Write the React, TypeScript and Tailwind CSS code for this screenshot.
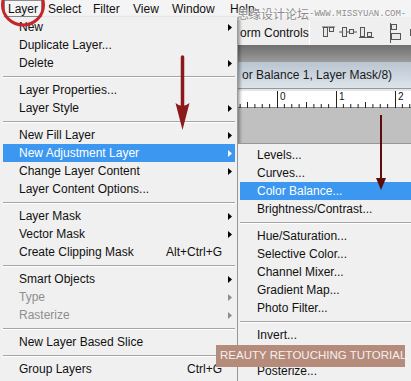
type Row =
  | { sep: true }
  | { label: string; arrow?: boolean; shortcut?: string; disabled?: boolean; active?: boolean; sep?: false };

const mainMenu: Row[] = [
  { label: "New", arrow: true },
  { label: "Duplicate Layer..." },
  { label: "Delete", arrow: true },
  { sep: true },
  { label: "Layer Properties..." },
  { label: "Layer Style", arrow: true },
  { sep: true },
  { label: "New Fill Layer", arrow: true },
  { label: "New Adjustment Layer", arrow: true, active: true },
  { label: "Change Layer Content", arrow: true },
  { label: "Layer Content Options..." },
  { sep: true },
  { label: "Layer Mask", arrow: true },
  { label: "Vector Mask", arrow: true },
  { label: "Create Clipping Mask", shortcut: "Alt+Ctrl+G" },
  { sep: true },
  { label: "Smart Objects", arrow: true },
  { label: "Type", arrow: true, disabled: true },
  { label: "Rasterize", arrow: true, disabled: true },
  { sep: true },
  { label: "New Layer Based Slice" },
  { sep: true },
  { label: "Group Layers", shortcut: "Ctrl+G" },
];

const subMenu: Row[] = [
  { label: "Levels..." },
  { label: "Curves..." },
  { label: "Color Balance...", active: true },
  { label: "Brightness/Contrast..." },
  { sep: true },
  { label: "Hue/Saturation..." },
  { label: "Selective Color..." },
  { label: "Channel Mixer..." },
  { label: "Gradient Map..." },
  { label: "Photo Filter..." },
  { sep: true },
  { label: "Invert..." },
  { label: "Threshold..." },
  { label: "Posterize..." },
];

function Arrow({ color }: { color: string }) {
  return (
    <svg width="4" height="7" viewBox="0 0 4 7">
      <polygon points="0,0 4,3.5 0,7" fill={color} />
    </svg>
  );
}

function MenuRows({ rows, indent }: { rows: Row[]; indent: string }) {
  return (
    <>
      {rows.map((r, i) =>
        r.sep ? (
          <div key={i} className="h-[9px] flex flex-col justify-center">
            <div className="h-px bg-[#a5a5a5]" />
            <div className="h-px bg-white" />
          </div>
        ) : (
          <div
            key={i}
            className={`h-[18px] flex items-center pr-[3px] ${indent} ${
              r.active ? "bg-[#3b97ef] text-white" : r.disabled ? "text-[#8e8e8e]" : "text-[#111]"
            }`}
          >
            <span className="flex-1 whitespace-nowrap">{r.label}</span>
            {r.shortcut && <span className="whitespace-nowrap">{r.shortcut}</span>}
            <span className="w-[4px] ml-[6px] flex items-center">
              {r.arrow && <Arrow color={r.active ? "#fff" : r.disabled ? "#8e8e8e" : "#000"} />}
            </span>
          </div>
        )
      )}
    </>
  );
}

function Ruler() {
  const ticks = [];
  for (let k = -5; k < 24; k++) {
    const x = 39 + (k * 59) / 8;
    if (k % 8 === 0) continue;
    const h = Math.abs(k % 8) === 4 ? 6 : 4;
    ticks.push(<line key={k} x1={x} y1={17 - h} x2={x} y2={17} stroke="#222" strokeWidth="1" />);
  }
  return (
    <svg width="173" height="17" viewBox="0 0 173 17">
      {ticks}
      {[39, 98, 157].map((x, i) => (
        <g key={x}>
          <line x1={x + 0.5} y1="0" x2={x + 0.5} y2="17" stroke="#222" strokeWidth="1" />
          <text x={x + 3} y="9" fontSize="10" fontFamily="Liberation Sans, Arial, sans-serif" fill="#111">
            {i}
          </text>
        </g>
      ))}
    </svg>
  );
}

function AlignIcons() {
  return (
    <svg width="100" height="24" viewBox="0 0 100 24">
      {/* top align */}
      <rect x="1.5" y="5.5" width="4" height="9" fill="#e8e8e8" stroke="#555" />
      <rect x="7.5" y="5.5" width="4" height="4" fill="#e8e8e8" stroke="#555" />
      <line x1="0" y1="5" x2="13" y2="5" stroke="#555" />
      {/* center align */}
      <line x1="17" y1="10" x2="35" y2="10" stroke="#555" />
      <rect x="20.5" y="5.5" width="4" height="9" fill="#e8e8e8" stroke="#555" />
      <rect x="27.5" y="7.5" width="4" height="4" fill="#e8e8e8" stroke="#555" />
      {/* bottom align */}
      <rect x="38.5" y="5.5" width="4" height="9" fill="#e8e8e8" stroke="#555" />
      <rect x="45.5" y="10.5" width="4" height="4" fill="#e8e8e8" stroke="#555" />
      <line x1="37" y1="15.5" x2="52" y2="15.5" stroke="#555" />
      {/* left align */}
      <line x1="68.5" y1="1" x2="68.5" y2="21" stroke="#555" />
      <rect x="69.5" y="2.5" width="5" height="5" fill="#e8e8e8" stroke="#555" />
      <rect x="69.5" y="11.5" width="9" height="6" fill="#e8e8e8" stroke="#555" />
      <rect x="88.5" y="7.5" width="8" height="6" fill="#e8e8e8" stroke="#555" />
    </svg>
  );
}

export default function App() {
  return (
    <div className="relative w-[411px] h-[381px] overflow-hidden bg-[#f0f0f0] font-['Liberation_Sans',Arial,sans-serif] text-[12px]">
      {/* menu bar */}
      <div className="h-[17px] flex items-center bg-[#f4f4f4] text-[#111]">
        <span className="ml-[4px] w-[38px] h-[17px] border border-[#8c8c8c] pl-[3px] flex items-center">Layer</span>
        <span className="w-[51px] pl-[6px]">Select</span>
        <span className="w-[40px]">Filter</span>
        <span className="w-[39px]">View</span>
        <span className="w-[58px]">Window</span>
        <span>Help</span>
      </div>

      <div className="flex">
        {/* main layer menu */}
        <div className="relative z-10 w-[238px] shrink-0 h-[364px] bg-[#f0f0f0] border-r border-[#9a9a9a] pt-px pl-[3px] pr-[2px] shadow-[2px_1px_3px_rgba(0,0,0,0.35)]">
          <MenuRows rows={mainMenu} indent="pl-[16px]" />
        </div>

        {/* photoshop workspace */}
        <div className="flex-1 flex flex-col">
          <div className="h-[28px] flex items-center bg-[#efefef]">
            <span className="pl-[2px] pt-[4px] w-[71px] whitespace-nowrap text-[#111]">orm Controls</span>
            <div className="w-px h-[24px] self-end bg-[#a9a9a9] border-r border-white" />
            <div className="ml-[12px] mt-[5px]">
              <AlignIcons />
            </div>
          </div>
          <div className="h-[17px] bg-gradient-to-b from-[#6f6f6f] to-[#9c9c9c]" />
          <div className="h-[27px] flex items-center bg-gradient-to-b from-[#b9c5d1] to-[#dde4eb] border-b border-[#8f99a3]">
            <span className="pl-[4px] whitespace-nowrap text-[#1a1a1a]">or Balance 1, Layer Mask/8)</span>
          </div>
          <div className="h-[2px] bg-[#e6e6e6]" />
          <div className="h-[17px] bg-white border-b border-[#888]">
            <Ruler />
          </div>
          <div className="h-[35px] bg-[#c0c0c0]" />

          {/* adjustment submenu */}
          <div className="relative z-20 -ml-[1px] flex-1 bg-[#f0f0f0] border-t border-l border-[#979797] pt-[2px] pl-[2px]">
            <MenuRows rows={subMenu} indent="pl-[17px]" />
          </div>
        </div>
      </div>

      {/* red circle around Layer */}
      <svg className="absolute left-0 top-0 z-30" width="50" height="30" viewBox="0 0 50 30">
        <ellipse cx="23" cy="5" rx="20.5" ry="20" fill="none" stroke="#c4262b" strokeWidth="3" />
      </svg>

      {/* arrows */}
      <svg className="absolute left-0 top-0 z-30" width="411" height="381" viewBox="0 0 411 381">
        <line x1="182.5" y1="57" x2="182.5" y2="108" stroke="#8c1a1d" strokeWidth="3.5" strokeLinecap="round" />
        <path d="M175.5 103 Q182.5 109 189.5 103 L182.5 130 Z" fill="#8c1a1d" />
        <line x1="381" y1="115" x2="381" y2="181" stroke="#5e0b0b" strokeWidth="2" />
        <path d="M376 178 L386 178 L381 190 Z" fill="#5e0b0b" />
      </svg>

      {/* watermark */}
      <div className="absolute left-[237px] top-[8px] z-30 flex items-center whitespace-nowrap text-[#8a8a8a] [text-shadow:0_0_2px_#fff,0_0_1px_#fff]">
        <span className="text-[12px] font-['Noto_Sans_CJK_SC',sans-serif] leading-none">思缘设计论坛</span>
        <span className="text-[9px] font-['Liberation_Mono',monospace] leading-none">-WWW.MISSYUAN.COM-</span>
      </div>

      {/* tutorial banner */}
      <div className="absolute left-[216px] top-[345px] z-30 w-[189px] h-[22px] bg-[#b58b7c] flex items-center pl-[4px] text-[11.5px] text-[#f7efeb] whitespace-nowrap">
        REAUTY RETOUCHING TUTORIAL
      </div>
    </div>
  );
}
